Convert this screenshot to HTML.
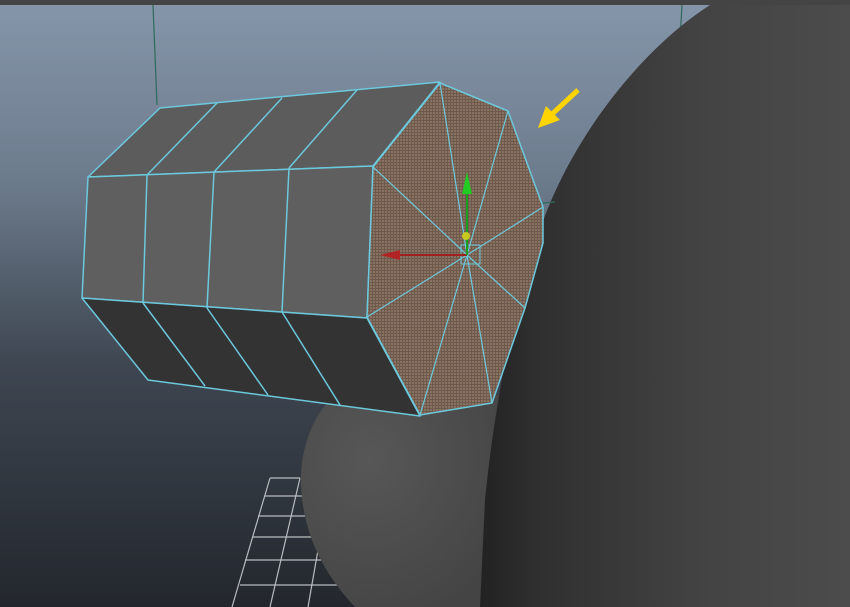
<!DOCTYPE html>
<html><head><meta charset="utf-8"><style>
html,body{margin:0;padding:0;width:850px;height:607px;overflow:hidden;background:#2a2f36}
svg{display:block}
</style></head><body>
<svg width="850" height="607" viewBox="0 0 850 607" xmlns="http://www.w3.org/2000/svg">
<defs>
<linearGradient id="bg" x1="0" y1="0" x2="0" y2="1">
<stop offset="0" stop-color="#8696aa"/>
<stop offset="0.3" stop-color="#6c7b8c"/>
<stop offset="0.6" stop-color="#3e4651"/>
<stop offset="1" stop-color="#23272d"/>
</linearGradient>
<linearGradient id="big" x1="0" y1="0" x2="1" y2="0">
<stop offset="0" stop-color="#222"/>
<stop offset="0.15" stop-color="#2f2f2f"/>
<stop offset="0.6" stop-color="#434343"/>
<stop offset="1" stop-color="#4c4c4c"/>
</linearGradient>
<radialGradient id="small" cx="0.35" cy="0.3" r="0.8">
<stop offset="0" stop-color="#575757"/>
<stop offset="1" stop-color="#444"/>
</radialGradient>
<pattern id="chk" width="3" height="3" patternUnits="userSpaceOnUse">
<rect width="3" height="3" fill="#8a7262"/>
<rect width="3" height="1" fill="#6d5a4d"/>
<rect width="1" height="3" fill="#6d5a4d"/>
</pattern>
</defs>
<rect width="850" height="607" fill="url(#bg)"/>
<rect width="850" height="5" fill="#444"/>
<line x1="153" y1="5" x2="157" y2="105" stroke="#2f6a5a" stroke-width="1.2"/>
<line x1="682" y1="5" x2="680" y2="40" stroke="#2f6a5a" stroke-width="1.2"/>
<g stroke="#b8bcc0" stroke-width="1.2" fill="none">
<line x1="270" y1="478" x2="300" y2="478"/>
<line x1="265" y1="496" x2="302" y2="496"/>
<line x1="258" y1="516" x2="305" y2="516"/>
<line x1="252" y1="537" x2="312" y2="537"/>
<line x1="245" y1="560" x2="325" y2="560"/>
<line x1="240" y1="585" x2="340" y2="585"/>
<line x1="270" y1="478" x2="232" y2="607"/>
<line x1="300" y1="478" x2="270" y2="607"/>
<line x1="318" y1="550" x2="308" y2="607"/>
</g>
<path d="M335,395 C312,415 300,450 301,485 C303,530 320,570 355,607 L500,607 L500,395 Z" fill="url(#small)"/>
<path d="M710,5 C640,50 570,140 540,230 C515,300 495,400 485,500 L480,607 L850,607 L850,5 Z" fill="url(#big)"/>
<g stroke="#6cc8dc" stroke-width="1.5" stroke-linejoin="round">
<polygon points="160,108 440,82 373,166 88,177" fill="#5c5c5c"/>
<polygon points="88,177 373,166 367,318 82,298" fill="#5f5f5f"/>
<polygon points="82,298 367,318 420,416 148,380" fill="#333"/>
<line x1="217" y1="103" x2="147" y2="175"/>
<line x1="282" y1="98" x2="214" y2="172"/>
<line x1="357" y1="90" x2="289" y2="168"/>
<line x1="147" y1="175" x2="143" y2="303"/>
<line x1="214" y1="172" x2="207" y2="308"/>
<line x1="289" y1="168" x2="282" y2="312"/>
<line x1="143" y1="303" x2="205" y2="386"/>
<line x1="207" y1="308" x2="268" y2="395"/>
<line x1="282" y1="312" x2="340" y2="405"/>
<polygon points="440,83 508,111 543,207 543,243 525,308 492,403 420,415 367,317 373,167" fill="url(#chk)"/>
<g stroke-width="1.2">
<line x1="467" y1="255" x2="440" y2="83"/>
<line x1="467" y1="255" x2="508" y2="111"/>
<line x1="467" y1="255" x2="543" y2="207"/>
<line x1="467" y1="255" x2="525" y2="308"/>
<line x1="467" y1="255" x2="492" y2="403"/>
<line x1="467" y1="255" x2="420" y2="415"/>
<line x1="467" y1="255" x2="367" y2="317"/>
<line x1="467" y1="255" x2="373" y2="167"/>
</g>
<rect x="461" y="245" width="19" height="19" fill="none" stroke-width="1"/>
</g>
<line x1="543" y1="203" x2="555" y2="202" stroke="#2f6a5a" stroke-width="1.2"/>
<line x1="467" y1="255" x2="396" y2="255" stroke="#a02020" stroke-width="2"/>
<polygon points="380,255 400,250 400,260" fill="#b02424"/>
<line x1="467" y1="255" x2="467" y2="190" stroke="#1aa01a" stroke-width="2"/>
<polygon points="467,172 462,194 472,194" fill="#22cc22"/>
<circle cx="466" cy="236" r="4" fill="#c8c820"/>
<line x1="578" y1="90" x2="550" y2="116" stroke="#ffd400" stroke-width="5"/>
<polygon points="538,128 546,106 560,120" fill="#ffd400"/>
</svg>
</body></html>
